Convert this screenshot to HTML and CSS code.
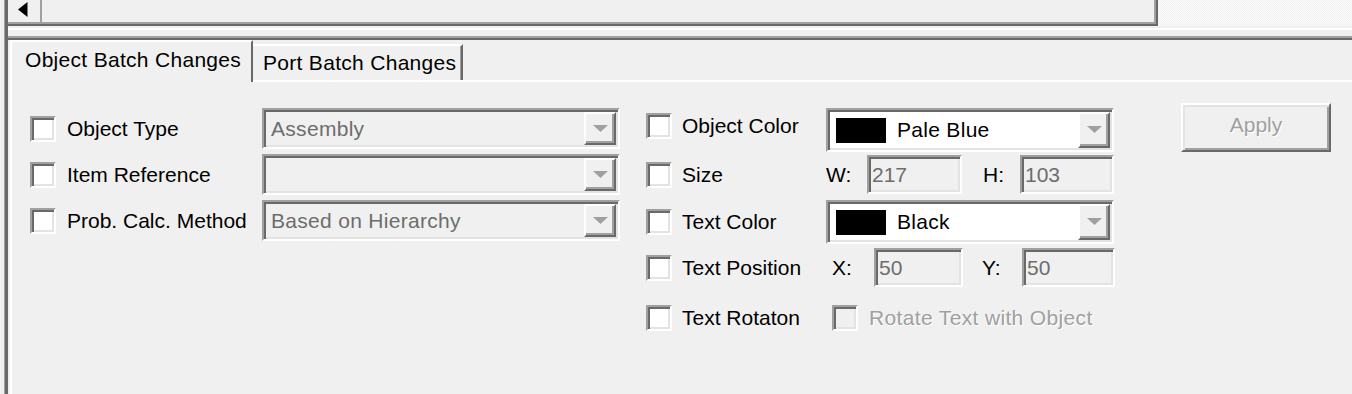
FILE: index.html
```html
<!DOCTYPE html>
<html>
<head>
<meta charset="utf-8">
<link rel="stylesheet" href="styles.css">
</head>
<body>
<div class="window">
  <div class="frame">
    <div class="hscroll">
      <div class="hscroll-bar">
        <div class="hscroll-btn"><svg width="10" height="16" viewBox="0 0 10 16"><polygon points="9.5,0 0,7.5 9.5,15" fill="#000"/></svg></div>
        <div class="hscroll-thumb"></div>
      </div>
      <div class="hscroll-track"></div>
    </div>
    <div class="divider"></div>
    <div class="tabs">
      <div class="tabstrip">
        <div class="tab tab-active">Object Batch Changes</div>
        <div class="tab tab-inactive">Port Batch Changes</div>
      </div>
      <div class="panel">
        <div class="panel-body">
          <div class="group-left">
            <div class="lrow">
              <div class="chk-label w-left"><span class="cb"></span><span>Object Type</span></div>
              <div class="combo combo-left"><span class="combo-text">Assembly</span><span class="drop-btn"><svg width="15" height="8" viewBox="0 0 15 8"><polygon points="0,0 15,0 7.5,7" fill="#a0a0a0"/></svg></span></div>
            </div>
            <div class="lrow">
              <div class="chk-label w-left"><span class="cb"></span><span>Item Reference</span></div>
              <div class="combo combo-left"><span class="combo-text"></span><span class="drop-btn"><svg width="15" height="8" viewBox="0 0 15 8"><polygon points="0,0 15,0 7.5,7" fill="#a0a0a0"/></svg></span></div>
            </div>
            <div class="lrow">
              <div class="chk-label w-left"><span class="cb"></span><span>Prob. Calc. Method</span></div>
              <div class="combo combo-left"><span class="combo-text">Based on Hierarchy</span><span class="drop-btn"><svg width="15" height="8" viewBox="0 0 15 8"><polygon points="0,0 15,0 7.5,7" fill="#a0a0a0"/></svg></span></div>
            </div>
          </div>
          <div class="group-right">
            <div class="rrow rrow-1">
              <div class="chk-label w-right"><span class="cb"></span><span>Object Color</span></div>
              <div class="combo combo-color"><span class="swatch"></span><span class="combo-text combo-text-dark">Pale Blue</span><span class="drop-btn"><svg width="15" height="8" viewBox="0 0 15 8"><polygon points="0,0 15,0 7.5,7" fill="#a0a0a0"/></svg></span></div>
            </div>
            <div class="rrow rrow-2">
              <div class="chk-label w-right"><span class="cb"></span><span>Size</span></div>
              <span class="coord coord-w">W:</span>
              <div class="tbox tbox-w">217</div>
              <span class="coord coord-h">H:</span>
              <div class="tbox tbox-h">103</div>
            </div>
            <div class="rrow rrow-3">
              <div class="chk-label w-right"><span class="cb"></span><span>Text Color</span></div>
              <div class="combo combo-color"><span class="swatch"></span><span class="combo-text combo-text-dark">Black</span><span class="drop-btn"><svg width="15" height="8" viewBox="0 0 15 8"><polygon points="0,0 15,0 7.5,7" fill="#a0a0a0"/></svg></span></div>
            </div>
            <div class="rrow rrow-4">
              <div class="chk-label w-right"><span class="cb"></span><span>Text Position</span></div>
              <span class="coord coord-x">X:</span>
              <div class="tbox tbox-x">50</div>
              <span class="coord coord-y">Y:</span>
              <div class="tbox tbox-y">50</div>
            </div>
            <div class="rrow rrow-5">
              <div class="chk-label w-right"><span class="cb"></span><span>Text Rotaton</span></div>
              <div class="chk-label chk-disabled"><span class="cb cb-disabled"></span><span class="disabled-text">Rotate Text with Object</span></div>
            </div>
          </div>
          <div class="apply">Apply</div>
        </div>
      </div>
    </div>
  </div>
</div>
</body>
</html>
```
FILE: styles.css
```css
html, body {
  margin: 0;
  padding: 0;
}
body {
  background: #f0f0f0;
  font-family: "Liberation Sans", Arial, sans-serif;
  font-size: 21px;
  color: #000;
  width: 1352px;
  height: 394px;
  overflow: hidden;
}
.window {
  margin-left: 4px;
  border-left: 1px solid #a0a0a0;
  height: 394px;
  box-sizing: border-box;
}
.frame {
  border-left: 3px solid #696969;
  height: 100%;
  display: flex;
  flex-direction: column;
}
.hscroll {
  display: flex;
  height: 26px;
}
.hscroll-bar {
  width: 1150px;
  box-sizing: border-box;
  display: flex;
  padding: 0 2px 2px 0;
  border-right: 2px solid #696969;
  border-bottom: 2px solid #696969;
  box-shadow: inset -2px -2px #a0a0a0;
}
.hscroll-btn {
  width: 34px;
  box-sizing: border-box;
  border-right: 2px solid #a0a0a0;
  padding: 2px 0 0 10px;
}
.hscroll-btn svg {
  display: block;
}
.hscroll-thumb {
  flex: 1;
}
.hscroll-track {
  flex: 1;
  background: repeating-conic-gradient(#ffffff 0 25%, #ececec 0 50%) 0 0 / 2px 2px;
}
.divider {
  height: 12px;
  box-sizing: border-box;
  margin-top: 2px;
  border-top: 2px solid #fff;
  border-bottom: 2px solid #696969;
  box-shadow: inset 0 -2px #a0a0a0;
}
.tabs {
  flex: 1;
  display: flex;
  flex-direction: column;
  padding-left: 2px;
}
.tabstrip {
  display: flex;
  height: 40px;
  align-items: flex-end;
}
.tab {
  box-sizing: border-box;
  white-space: nowrap;
  line-height: 24px;
  letter-spacing: 0.3px;
}
.tab-active {
  width: 243px;
  height: 42px;
  margin-bottom: -2px;
  position: relative;
  z-index: 1;
  background: #f0f0f0;
  border-left: 2px solid #fff;
  border-top: 2px solid #fff;
  border-right: 2px solid #696969;
  padding: 6px 0 0 13px;
}
.tab-inactive {
  width: 210px;
  height: 36px;
  border-top: 2px solid #fff;
  border-right: 2px solid #696969;
  box-shadow: inset -1px 0 #a0a0a0;
  padding: 5px 0 0 10px;
}
.panel {
  flex: 1;
  border-top: 2px solid #fff;
  border-left: 2px solid #fff;
}
.panel-body {
  display: flex;
  align-items: flex-start;
  padding: 21px 0 0 18px;
}
.group-left {
  margin-top: 5px;
  display: flex;
  flex-direction: column;
  gap: 5px;
}
.lrow {
  display: flex;
  align-items: center;
  height: 41px;
}
.chk-label {
  display: flex;
  align-items: center;
  line-height: 26px;
  white-space: nowrap;
  flex: none;
}
.w-left {
  width: 232px;
  gap: 11px;
}
.w-right {
  width: 180px;
  gap: 10px;
}
.cb {
  width: 26px;
  height: 26px;
  box-sizing: border-box;
  border: 2px solid;
  border-color: #a0a0a0 #fff #fff #a0a0a0;
  background: #fff;
  box-shadow: inset 2px 2px #696969, inset -2px -2px #e3e3e3;
  flex: none;
}
.cb-disabled {
  background: #f0f0f0;
}
.chk-disabled {
  gap: 11px;
  margin-left: 6px;
}
.disabled-text {
  color: #a0a0a0;
  text-shadow: 1px 1px #fff;
  letter-spacing: 0.35px;
}
.combo {
  box-sizing: border-box;
  display: flex;
  border: 2px solid;
  border-color: #a0a0a0 #fff #fff #a0a0a0;
  padding: 2px;
  box-shadow: inset 2px 2px #696969, inset -2px -2px #e3e3e3;
  flex: none;
}
.combo-left {
  width: 358px;
  height: 41px;
  color: #6d6d6d;
}
.combo-color {
  width: 288px;
  height: 44px;
  background: #fff;
  align-items: center;
}
.combo-text {
  flex: 1;
  display: flex;
  align-items: center;
  padding-left: 5px;
  white-space: nowrap;
  letter-spacing: 0.3px;
}
.combo-color .combo-text {
  padding-left: 0;
}
.combo-text-dark {
  color: #000;
}
.swatch {
  width: 50px;
  height: 25px;
  background: #000;
  margin: 0 11px 0 6px;
  flex: none;
}
.drop-btn {
  width: 32px;
  align-self: stretch;
  box-sizing: border-box;
  border: 2px solid;
  border-color: #fff #696969 #696969 #fff;
  box-shadow: inset -2px -2px #a0a0a0;
  background: #f0f0f0;
  display: flex;
  align-items: center;
  justify-content: center;
  flex: none;
}
.drop-btn svg {
  display: block;
}
.group-right {
  margin-left: 26px;
  margin-top: 5px;
  display: flex;
  flex-direction: column;
}
.rrow {
  display: flex;
  align-items: center;
}
.rrow-1 {
  height: 44px;
}
.rrow-1 .chk-label {
  margin-bottom: 8px;
}
.rrow-2 {
  height: 39px;
  margin-top: 3px;
}
.rrow-3 {
  height: 44px;
  margin-top: 6px;
}
.rrow-4 {
  height: 39px;
  margin-top: 4px;
}
.rrow-5 {
  height: 26px;
  margin-top: 18px;
}
.coord {
  flex: none;
}
.coord-w { width: 41px; }
.coord-h { width: 37px; margin-left: 21px; }
.coord-x { width: 42px; margin-left: 6px; }
.coord-y { width: 40px; margin-left: 19px; }
.tbox {
  box-sizing: border-box;
  height: 39px;
  border: 2px solid;
  border-color: #a0a0a0 #fff #fff #a0a0a0;
  padding: 2px 2px 2px 3px;
  box-shadow: inset 2px 2px #696969, inset -2px -2px #e3e3e3;
  color: #6d6d6d;
  line-height: 31px;
  flex: none;
}
.tbox-w { width: 95px; }
.tbox-h { width: 94px; }
.tbox-x { width: 89px; }
.tbox-y { width: 93px; }
.apply {
  margin-left: 66px;
  width: 150px;
  height: 49px;
  box-sizing: border-box;
  border: 2px solid;
  border-color: #fff #696969 #696969 #fff;
  box-shadow: inset 2px 2px #e3e3e3, inset -2px -2px #a0a0a0;
  display: flex;
  align-items: center;
  justify-content: center;
  padding-bottom: 6px;
  color: #a0a0a0;
  text-shadow: 1px 1px #fff;
  flex: none;
}
```
